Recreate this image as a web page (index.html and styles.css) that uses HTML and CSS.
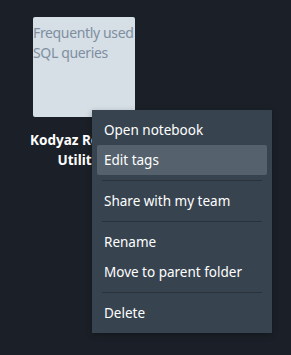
FILE: index.html
```html
<!DOCTYPE html>
<html>
<head>
<meta charset="utf-8">
<link rel="stylesheet" href="styles.css">
</head>
<body>
<div class="page">
  <div class="item-card">
    <div class="thumb">Frequently used SQL queries</div>
    <div class="label">Kodyaz Redshift Utilities</div>
  </div>
  <ul class="menu">
    <li class="menu-item">Open notebook</li>
    <li class="menu-item active">Edit tags</li>
    <li class="sep"></li>
    <li class="menu-item">Share with my team</li>
    <li class="sep"></li>
    <li class="menu-item">Rename</li>
    <li class="menu-item">Move to parent folder</li>
    <li class="sep"></li>
    <li class="menu-item">Delete</li>
  </ul>
</div>
</body>
</html>
```
FILE: styles.css
```css
html, body {
  margin: 0;
  padding: 0;
  background: #1b2028;
}
body {
  width: 291px;
  height: 355px;
  overflow: hidden;
  font-family: "Noto Sans", "Open Sans", sans-serif;
}
.page {
  position: relative;
  width: 291px;
  height: 355px;
  padding: 17px 0 0 33px;
  box-sizing: border-box;
}
.item-card {
  width: 102px;
}
.thumb {
  width: 102px;
  height: 100px;
  background: #d6dee6;
  border-radius: 2px;
  color: #7e8fa0;
  font-size: 14px;
  line-height: 20px;
  padding-top: 6px;
  box-sizing: border-box;
  letter-spacing: -0.35px;
  overflow: hidden;
}
.label {
  margin-top: 13px;
  color: #ffffff;
  font-weight: bold;
  font-size: 13.5px;
  line-height: 20px;
  text-align: center;
  width: 112px;
  margin-left: -5px;
}
.menu {
  position: absolute;
  left: 92px;
  top: 110px;
  width: 180px;
  margin: 0;
  padding: 5px;
  box-sizing: border-box;
  list-style: none;
  background: #37444f;
  box-shadow: 0 2px 6px rgba(0,0,0,0.3);
}
.menu-item {
  height: 30px;
  line-height: 31px;
  padding-left: 7px;
  color: #ffffff;
  font-size: 13.5px;
  border-radius: 2px;
}
.menu-item.active {
  background: #55626d;
}
.sep {
  height: 1px;
  background: #29323b;
  margin: 5px 5px 5px 5px;
}
```
